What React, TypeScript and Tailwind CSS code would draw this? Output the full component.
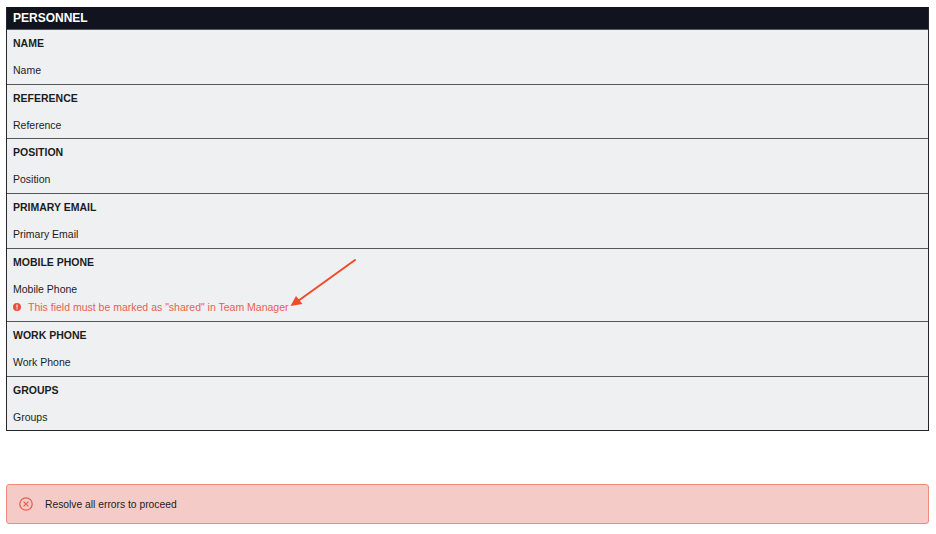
const rows = [
  { label: "NAME", value: "Name" },
  { label: "REFERENCE", value: "Reference" },
  { label: "POSITION", value: "Position" },
  { label: "PRIMARY EMAIL", value: "Primary Email" },
  { label: "MOBILE PHONE", value: "Mobile Phone", error: 'This field must be marked as "shared" in Team Manager' },
  { label: "WORK PHONE", value: "Work Phone" },
  { label: "GROUPS", value: "Groups" },
];

export default function App() {
  return (
    <div className="relative h-[534px] w-[936px] overflow-hidden bg-white pl-[6px] pr-[7px] pt-[7px] font-['Liberation_Sans',Arial,sans-serif] text-[#1b1d22]">
      <section className="border-x border-b border-[#23252b]">
        <h2 className="flex h-[22px] items-center bg-[#11141f] px-[6px] pb-[1px] text-[12px] font-bold leading-none text-white">PERSONNEL</h2>
        {rows.map((r) => (
          <div key={r.label} className={`border-t border-[#55575c] bg-[#eff0f2] px-[6px] pt-[7px] ${r.error ? "h-[73px]" : "h-[54.72px]"}`}>
            <div className="text-[10.5px] font-bold leading-[12px]">{r.label}</div>
            <div className="mt-[15px] text-[10.5px] leading-[12px]">{r.value}</div>
            {r.error && (
              <div className="mt-[6px] flex items-center gap-[7px] text-[10.5px] leading-[12px] text-[#e9604f]">
                <svg width="8" height="8" viewBox="0 0 9 9" className="shrink-0">
                  <circle cx="4.5" cy="4.5" r="4.5" fill="#e8503f" />
                  <rect x="3.9" y="1.8" width="1.2" height="3.4" fill="#fff" />
                  <rect x="3.9" y="6" width="1.2" height="1.2" fill="#fff" />
                </svg>
                <span>{r.error}</span>
              </div>
            )}
          </div>
        ))}
      </section>
      <div className="mt-[53px] flex h-[40px] items-center gap-[12px] rounded-[3px] border border-[#ef8a80] bg-[#f5cbc8] pl-[12px] text-[10.3px]">
        <svg width="14" height="14" viewBox="0 0 14 14" fill="none" stroke="#e8604f" strokeWidth="1.3" className="shrink-0">
          <circle cx="7" cy="7" r="6.2" />
          <path d="M4.6 4.6l4.8 4.8M9.4 4.6l-4.8 4.8" />
        </svg>
        <span>Resolve all errors to proceed</span>
      </div>
      <svg className="absolute left-0 top-0" width="936" height="534" fill="none">
        <path d="M355 260L298 301" stroke="#ee4b2b" strokeWidth="2" strokeLinecap="round" />
        <path d="M290.5 306L296 296L302.5 304Z" fill="#ee4b2b" />
      </svg>
    </div>
  );
}
